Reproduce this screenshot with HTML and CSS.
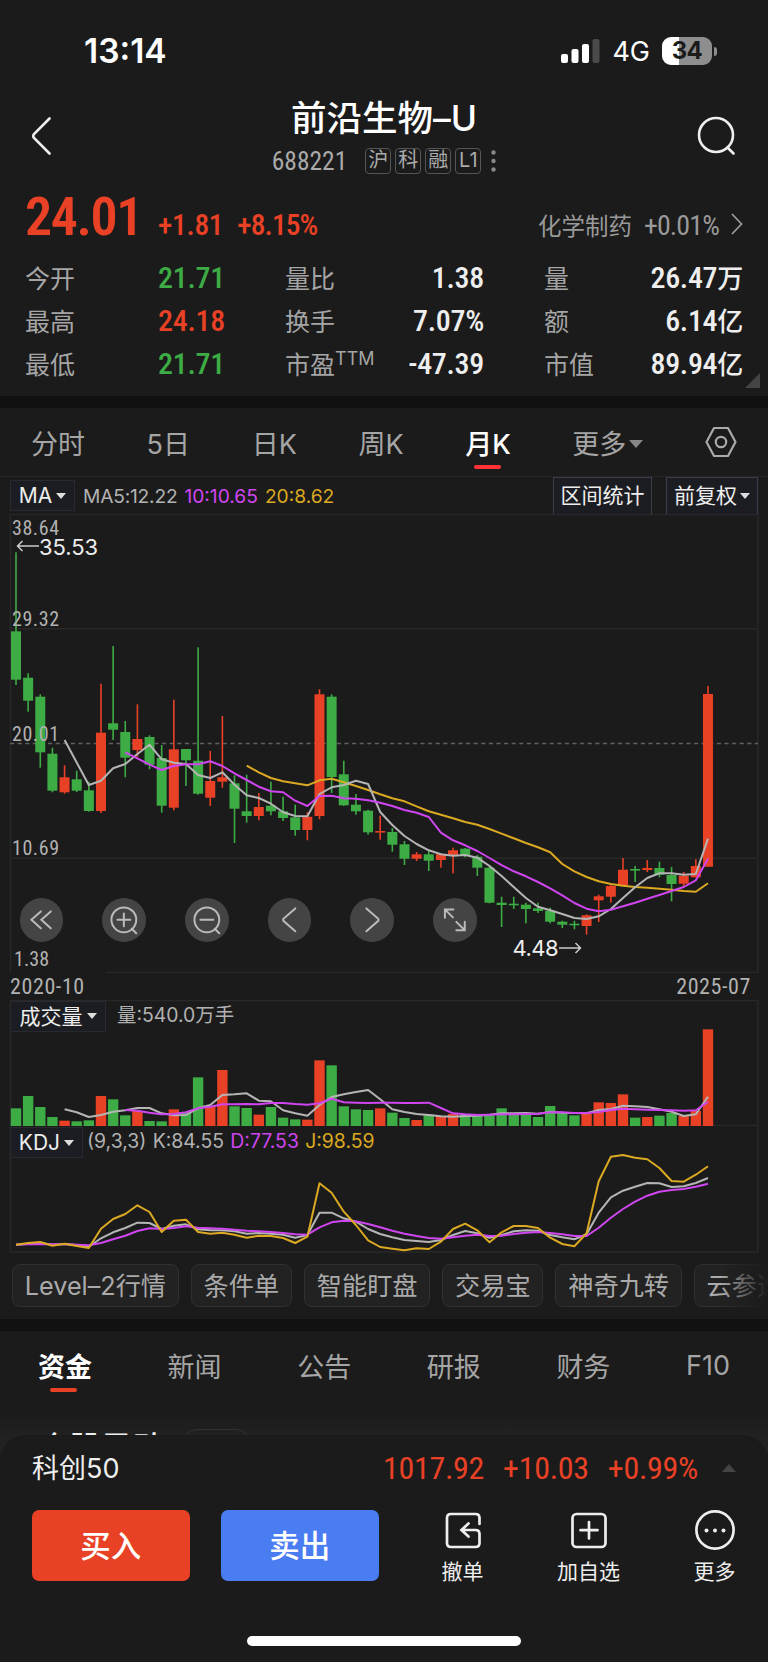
FILE: index.html
```
<!DOCTYPE html>
<html lang="zh-CN">
<head>
  <meta charset="UTF-8">
  <meta name="viewport" content="width=device-width, initial-scale=1.0">
  <title>前沿生物-U 688221</title>
  <link rel="stylesheet" href="styles.css">
</head>
<body>
  <div class="status-bar">
    <span class="time">13:14</span>
    <div class="status-right">
      <svg class="signal" width="39" height="24" viewBox="0 0 39 24">
        <rect x="0" y="15" width="7" height="9" rx="2" fill="#fff"/>
        <rect x="10.5" y="10" width="7" height="14" rx="2" fill="#fff"/>
        <rect x="21" y="5" width="7" height="19" rx="2" fill="#fff"/>
        <rect x="31.5" y="0" width="7" height="24" rx="2" fill="#4a4a4a"/>
      </svg>
      <span class="network">4G</span>
      <div class="battery"><span>34</span></div>
    </div>
  </div>

  <header class="header">
    <svg width="40" height="38" viewBox="0 0 40 38"><path d="M18.5 1.5 L3 17 Q1.5 19 3 21 L18.5 36.5" fill="none" stroke="#eee" stroke-width="2.6" stroke-linecap="round"/></svg>
    <div class="title">
      <h1>前沿生物–U</h1>
      <div class="code-row">
        <span class="code num">688221</span>
        <span class="tag">沪</span><span class="tag">科</span><span class="tag">融</span><span class="tag">L1</span>
        <svg width="5" height="22" viewBox="0 0 5 22" fill="#888"><circle cx="2.5" cy="2.5" r="2.2"/><circle cx="2.5" cy="11" r="2.2"/><circle cx="2.5" cy="19.5" r="2.2"/></svg>
      </div>
    </div>
    <svg width="40" height="40" viewBox="0 0 40 40" fill="none" stroke="#eee" stroke-width="2.6" stroke-linecap="round"><circle cx="19" cy="19" r="17"/><path d="M30.5 31.5 L36.5 37.5"/></svg>
  </header>

  <section class="quote">
    <div class="price-row">
      <span class="price num">24.01</span>
      <span class="change num">+1.81</span>
      <span class="change percent num">+8.15%</span>
      <span class="sector">化学制药</span>
      <span class="sector-change num">+0.01%</span>
      <svg width="12" height="22" viewBox="0 0 12 22"><path d="M1 1 L10.5 11 L1 21" fill="none" stroke="#999" stroke-width="1.8"/></svg>
    </div>
    <div class="stats">
      <span>今开</span><b class="num green">21.71</b><span>量比</span><b class="num">1.38</b><span>量</span><b class="num">26.47<small>万</small></b>
      <span>最高</span><b class="num red">24.18</b><span>换手</span><b class="num">7.07%</b><span>额</span><b class="num">6.14<small>亿</small></b>
      <span>最低</span><b class="num green">21.71</b><span>市盈<sup>TTM</sup></span><b class="num">-47.39</b><span>市值</span><b class="num">89.94<small>亿</small></b>
    </div>
    <i class="corner"></i>
  </section>

  <nav class="period-tabs">
    <span>分时</span>
    <span>5日</span>
    <span>日K</span>
    <span>周K</span>
    <span class="active">月K</span>
    <span>更多<i class="caret"></i></span>
    <svg width="32" height="32" viewBox="0 0 32 32" fill="none" stroke="#aaa" stroke-width="2.2" stroke-linejoin="round"><path d="M9 2 H23 L30.5 16 L23 30 H9 L1.5 16 Z"/><circle cx="16" cy="16" r="5.2"/></svg>
  </nav>

  <section class="charts">
    <div class="ma-row">
      <span class="pick ma-pick">MA<i class="caret"></i></span>
      <span class="c-white">MA5:12.22</span>
      <span class="c-purple">10:10.65</span>
      <span class="c-yellow">20:8.62</span>
      <span class="tool range">区间统计</span>
      <span class="tool adjust">前复权<i class="caret"></i></span>
    </div>

    <div class="panel">
      <svg id="kline" width="768" height="459" viewBox="0 514 768 459">
        <path class="grid" d="M10.5 973 V514.5 H758 V972.5 M10 628.8 H758 M10 858.3 H758 M106 972.5 H758"/>
        <path class="dash" d="M10 743.6 H758"/>
      </svg>
      <div class="chart-buttons">
        <button><svg viewBox="0 0 44 44"><path d="M21 13.5 L11.5 22 L21 30.5 M31 13.5 L21.5 22 L31 30.5"/></svg></button>
        <button><svg viewBox="0 0 44 44"><circle cx="22" cy="22" r="12.5"/><path d="M15.5 22 H28.5 M22 15.5 V28.5 M30 31 L34.5 35.5"/></svg></button>
        <button><svg viewBox="0 0 44 44"><circle cx="22" cy="22" r="12.5"/><path d="M15.5 22 H28.5 M30 31 L34.5 35.5"/></svg></button>
        <button><svg viewBox="0 0 44 44"><path d="M27.5 10.5 L15.5 21 Q15 22 15.5 23 L27.5 33.5"/></svg></button>
        <button><svg viewBox="0 0 44 44"><path d="M16.5 10.5 L28.5 21 Q29 22 28.5 23 L16.5 33.5"/></svg></button>
        <button><svg viewBox="0 0 44 44"><path d="M12 20 V11.5 H20.5 M12 11.5 L20 19.5 M23.5 24 L32 32.5 M32 24 V32.5 H23.5"/></svg></button>
      </div>
    </div>
    <div class="dates num"><span>2020-10</span><span>2025-07</span></div>

    <div class="panel">
      <svg id="volume" width="768" height="126" viewBox="0 1000 768 126">
        <path class="grid" d="M10.5 1126 V1000.5 H758 V1126 M10 1125.5 H758"/>
      </svg>
      <div class="panel-head">
        <span class="pick vol-pick">成交量<i class="caret"></i></span>
        <span class="c-white vol-value">量:540.0万手</span>
      </div>
    </div>
    <div class="panel">
      <svg id="kdj" width="768" height="127" viewBox="0 1126 768 127">
        <path class="grid" d="M10.5 1126 V1252 H758 V1126"/>
      </svg>
      <div class="panel-head">
        <span class="pick kdj-pick">KDJ<i class="caret"></i></span>
        <span class="c-white">(9,3,3)</span>
        <span class="c-white">K:84.55</span>
        <span class="c-purple">D:77.53</span>
        <span class="c-yellow">J:98.59</span>
      </div>
    </div>
  </section>

  <div class="chips">
    <span>Level–2行情</span><span>条件单</span><span>智能盯盘</span><span>交易宝</span><span>神奇九转</span><span>云参选</span>
  </div>

  <nav class="info-tabs">
    <span class="active">资金</span>
    <span>新闻</span>
    <span>公告</span>
    <span>研报</span>
    <span>财务</span>
    <span>F10</span>
  </nav>

  <div class="next-section">
    <h2>个股异动</h2><i class="pill"></i>
  </div>

  <footer class="sheet">
    <div class="index-row">
      <span class="index-name">科创50</span>
      <span class="num">1017.92</span>
      <span class="num">+10.03</span>
      <span class="num">+0.99%</span>
      <i class="caret-up"></i>
    </div>
    <div class="actions">
      <button class="buy">买入</button>
      <button class="sell">卖出</button>
      <div class="action">
        <svg viewBox="0 0 40 40"><path d="M36.5 14 V8 Q36.5 4 32.5 4 H8 Q4 4 4 8 V33 Q4 37 8 37 H32.5 Q36.5 37 36.5 33 V24 Q36.5 20 32.5 20 H19 M25.5 13.5 L18.5 20 L25.5 26.5"/></svg>
        撤单
      </div>
      <div class="action">
        <svg viewBox="0 0 40 40"><rect x="3.5" y="4" width="33" height="33" rx="4"/><path d="M20 12 V28.5 M11.5 20.2 H28.5"/></svg>
        加自选
      </div>
      <div class="action">
        <svg viewBox="0 0 40 40"><circle cx="20" cy="20" r="18.6"/><g fill="#eee" stroke="none"><circle cx="11.5" cy="20.5" r="2"/><circle cx="20" cy="20.5" r="2"/><circle cx="28.5" cy="20.5" r="2"/></g></svg>
        更多
      </div>
    </div>
    <div class="home-bar"></div>
  </footer>
  <script src="chart.js"></script>
</body>
</html>
```
FILE: styles.css
```
* {
  box-sizing: border-box;
}
body {
  margin: 0;
  width: 768px;
  height: 1663px;
  overflow: hidden;
  position: relative;
  background: #1b1b1b;
  color: #eee;
  font-family: Inter, "Noto Sans CJK SC", sans-serif;
}
svg {
  display: block;
}
button {
  border: 0;
  padding: 0;
  font-family: inherit;
}
.num {
  font-family: Roboto, "Noto Sans CJK SC", sans-serif;
  font-stretch: 75%;
  letter-spacing: -0.3px;
}
.red {
  color: #e84125;
}
.green {
  color: #3dac45;
}

/* status bar */
.status-bar {
  display: flex;
  justify-content: space-between;
  align-items: center;
  height: 102px;
  padding: 0 56px 0 84px;
}
.time {
  font-size: 33.5px;
  font-weight: 600;
  color: #fff;
}
.status-right {
  display: flex;
  align-items: center;
}
.network {
  margin: 1px 12px 0;
  font-size: 27px;
  color: #fff;
}
.battery {
  position: relative;
  width: 50px;
  height: 28px;
  border-radius: 9px;
  background: linear-gradient(to right, #fff 17px, #8e8e8e 17px);
  color: #1b1b1b;
  font-size: 24px;
  font-weight: 700;
  line-height: 28px;
  letter-spacing: -0.5px;
  text-align: center;
}
.battery::after {
  content: "";
  position: absolute;
  right: -5px;
  top: 10px;
  width: 3px;
  height: 9px;
  border-radius: 0 3px 3px 0;
  background: #8e8e8e;
}

/* header */
.header {
  display: flex;
  justify-content: space-between;
  align-items: center;
  height: 68px;
  padding: 0 31px;
}
.title {
  display: flex;
  flex-direction: column;
  align-items: center;
  padding-top: 3px;
}
h1 {
  margin: 0;
  font-size: 35.5px;
  font-weight: 500;
  line-height: 34px;
  color: #fff;
}
.code-row {
  display: flex;
  align-items: center;
  gap: 4px;
  margin-top: 12px;
}
.code {
  margin-right: 14px;
  font-size: 25.5px;
  line-height: 26px;
  letter-spacing: 0;
  color: #aaa;
}
.tag {
  width: 26px;
  height: 26px;
  border: 1.5px solid #555;
  border-radius: 4px;
  font-size: 20px;
  line-height: 22px;
  text-align: center;
  color: #aaa;
}
.code-row svg {
  margin-left: 6px;
}

/* quote */
.quote {
  position: relative;
  height: 238px;
  padding: 20px 25px 0;
  border-bottom: 12px solid #111;
}
.price-row {
  display: flex;
  align-items: baseline;
  height: 65px;
}
.price {
  font-size: 54px;
  font-weight: 600;
  line-height: 54px;
  letter-spacing: -1.4px;
  color: #e84125;
}
.change {
  margin-left: 16px;
  font-size: 29.5px;
  font-weight: 500;
  color: #e84125;
}
.percent {
  margin-left: 14px;
  letter-spacing: -0.9px;
}
.sector {
  margin-left: auto;
  font-size: 23.5px;
  color: #999;
}
.sector-change {
  margin: 0 12px 0 12px;
  font-size: 28px;
  letter-spacing: -0.9px;
  color: #999;
}
.stats {
  display: grid;
  grid-template-columns: 133px 127px 84px 115px 144px 1fr;
  grid-auto-rows: 43.2px;
  align-items: center;
  font-size: 25px;
  color: #a5a5a5;
}
.stats b {
  padding-top: 2px;
  font-size: 30px;
  font-weight: 500;
  line-height: 36px;
  text-align: right;
  color: #eee;
  white-space: nowrap;
}
.stats small {
  font-size: 26px;
  line-height: 0;
}
.stats b:nth-child(6n + 2) {
  text-align: left;
}
.stats span {
  white-space: nowrap;
}
.stats span:nth-child(6n + 5) {
  padding-left: 60px;
}
.stats b.red {
  color: #e84125;
}
.stats b.green {
  color: #3dac45;
}
.stats sup {
  font-size: 18px;
  line-height: 0;
}
.corner {
  position: absolute;
  right: 8px;
  bottom: 8px;
  width: 15px;
  height: 15px;
  background: #444;
  clip-path: polygon(100% 0, 100% 100%, 0 100%);
}

/* period tabs */
.period-tabs {
  display: flex;
  justify-content: space-between;
  align-items: center;
  height: 69px;
  padding: 0 31px;
  border-bottom: 1px solid #262626;
  font-size: 27px;
  color: #a5a5a5;
}
.active {
  position: relative;
  font-weight: 500;
  color: #fff;
}
.active::after {
  content: "";
  position: absolute;
  left: calc(50% - 14px);
  bottom: -7px;
  width: 27px;
  height: 4px;
  border-radius: 2px;
  background: #ff3337;
}
.caret {
  display: inline-block;
  margin-left: 4px;
  border: 5px solid transparent;
  border-top: 6px solid #ddd;
  border-bottom: 0;
  vertical-align: 4px;
}
.period-tabs .caret {
  margin-left: 3px;
  border-width: 8px 7px 0;
  border-top-color: #888;
  vertical-align: 6px;
}

/* charts */
.ma-row {
  display: flex;
  align-items: center;
  height: 37px;
  padding: 0 10px;
  font-size: 19.2px;
}
.pick {
  display: flex;
  align-items: center;
  justify-content: center;
  height: 31px;
  border: 1px solid #282a30;
  background: #1c1d22;
  font-size: 21px;
  color: #eee;
}
.ma-pick {
  width: 65px;
  margin-right: 8px;
}
.ma-row .c-white {
  letter-spacing: -0.2px;
}
.ma-row .c-white,
.ma-row .c-purple {
  margin-right: 7px;
}
.tool {
  display: flex;
  align-items: center;
  justify-content: center;
  height: 38px;
  padding-bottom: 3px;
  border: 1.5px solid #3a3d4a;
  background: #1c1d23;
  font-size: 21px;
}
.range {
  width: 99px;
  margin-left: auto;
}
.adjust {
  width: 92px;
  margin-left: 14px;
}
.adjust .caret {
  margin: 3px 0 0 3px;
}
.c-white {
  color: #b2b2b2;
}
.c-purple {
  color: #cf46f0;
}
.c-yellow {
  color: #dba922;
}
.panel {
  position: relative;
}
.grid {
  fill: none;
  stroke: #282828;
  stroke-width: 1.5;
}
.dash {
  stroke: #606060;
  stroke-width: 1.5;
  stroke-dasharray: 4.2 3.4;
}
.line {
  fill: none;
  stroke-width: 2;
  stroke-linejoin: round;
}
.up {
  fill: #e84125;
}
.down {
  fill: #3dac45;
}
.axis {
  font-family: Roboto, sans-serif;
  font-size: 20px;
  font-stretch: 85%;
  fill: #b2b2b2;
}
.mark {
  font-size: 22px;
  fill: #eee;
}
.arrow {
  fill: none;
  stroke: #ccc;
  stroke-width: 1.5;
}
.chart-buttons {
  position: absolute;
  left: 19.5px;
  top: 384px;
  display: flex;
  gap: 39px;
}
.chart-buttons button {
  width: 43.7px;
  height: 43.7px;
  border-radius: 50%;
  background: #444;
}
.chart-buttons svg {
  fill: none;
  stroke: #bbb;
  stroke-width: 2;
  stroke-linecap: round;
}
.dates {
  display: flex;
  justify-content: space-between;
  align-items: center;
  height: 27px;
  padding: 0 17px 0 10px;
  font-size: 22px;
  letter-spacing: 0.6px;
  color: #b2b2b2;
}
.panel-head {
  position: absolute;
  left: 10px;
  top: 1px;
  display: flex;
  align-items: center;
  font-size: 19.4px;
}
.vol-pick {
  width: 96px;
  margin-right: 11px;
  padding-bottom: 4px;
}
.vol-pick .caret {
  margin-top: 3px;
}
.vol-value {
  margin-top: -6px;
}
.kdj-pick {
  width: 73px;
  margin-right: 4px;
}
.kdj-pick ~ span {
  margin: -4px 6.3px 0 0;
}

/* shortcut chips */
.chips {
  position: relative;
  display: flex;
  gap: 12px;
  height: 78px;
  padding: 11px 12px 0;
  overflow: hidden;
  border-bottom: 12px solid #111;
}
.chips span {
  flex: none;
  height: 43px;
  padding: 0 11.8px;
  border: 1px solid #303030;
  border-radius: 8px;
  background: #222;
  font-size: 25.2px;
  line-height: 42px;
  color: #aaa;
}
.chips::after {
  content: "";
  position: absolute;
  top: 0;
  right: 0;
  width: 48px;
  height: 66px;
  background: linear-gradient(to right, transparent, #1b1b1b);
}

/* info tabs */
.info-tabs {
  display: flex;
  justify-content: space-between;
  align-items: center;
  height: 72px;
  padding: 0 38px 4px;
  font-size: 27px;
  color: #a5a5a5;
}
.info-tabs .active {
  font-weight: 700;
}
.info-tabs .active::after {
  bottom: -7px;
  left: 12px;
  background: #e84125;
}
.next-section {
  display: flex;
  height: 40px;
  margin-top: 10px;
  padding: 16px 32px 0 38px;
  background: linear-gradient(#1b1b1b, #222 25px);
}
h2 {
  margin: 3px 0 0;
  font-size: 31.5px;
  font-weight: 500;
  line-height: 32px;
}
.pill {
  width: 71px;
  height: 34px;
  margin-left: 17px;
  border: 1.5px solid #333;
  border-radius: 17px;
}

/* bottom sheet */
.sheet {
  position: absolute;
  left: 0;
  right: 0;
  top: 1435px;
  height: 228px;
  padding: 0 32px;
  border-radius: 26px 26px 0 0;
  border-bottom: 1px solid #fff;
  background: #1b1b1b;
}
.index-row {
  display: flex;
  align-items: center;
  height: 66px;
  color: #e84125;
}
.index-row .num {
  font-size: 32px;
  margin-right: 19px;
}
.index-name {
  margin-right: auto;
  padding-bottom: 3px;
  font-size: 27px;
  color: #eee;
}
.caret-up {
  margin-left: 5px;
  border: 7.5px solid transparent;
  border-bottom: 8px solid #444;
  border-top: 0;
}
.actions {
  display: flex;
  align-items: flex-start;
  margin-top: 9px;
}
.buy,
.sell {
  flex: none;
  width: 157.5px;
  height: 71px;
  margin-right: 31.5px;
  padding-bottom: 3px;
  border-radius: 7px;
  background: #e84125;
  font-size: 30.5px;
  font-weight: 500;
  color: #fff;
}
.sell {
  margin-right: 52px;
  background: #4a7cf2;
}
.action {
  flex: none;
  display: flex;
  flex-direction: column;
  align-items: center;
  width: 64px;
  margin-right: 62px;
  font-size: 21px;
  line-height: 44px;
  white-space: nowrap;
}
.action svg {
  width: 40px;
  height: 40px;
  fill: none;
  stroke: #eee;
  stroke-width: 2.7;
  stroke-linecap: round;
}
.home-bar {
  position: absolute;
  left: 247px;
  top: 201px;
  width: 274px;
  height: 10px;
  border-radius: 5px;
  background: #fff;
}
```
FILE: chart.js
```
const step = 12.14;
const firstX = 16;

// u = close up (red), d = close down (green); then high, body top, body bottom, low
const candles = [
  ['d',552.3,631.3,679.7,685], ['d',673.3,677.7,700.7,711.7], ['d',694.3,696.7,752.3,767.7], ['d',747.7,753.7,790.7,792.3],
  ['u',765.3,777.3,792.3,793.7], ['d',770.7,779.3,790.7,792], ['d',781.7,790.3,811,811.7], ['u',683.7,732.7,811,813],
  ['d',646,723.3,729.7,740], ['d',721,732,757.7,777.3], ['u',704.3,739,750,756.7], ['d',735.3,737,764.7,769.3],
  ['d',745,758,805.7,812.7], ['u',699.7,749.3,807.7,810.3], ['d',749,749,760.3,786], ['d',647.3,760.7,793.7,794.7],
  ['u',751,781,797.7,806], ['u',716,777.3,781.7,787.7], ['d',775.3,783.3,808.7,843], ['d',774.7,811.3,816,822.7],
  ['u',793,807,816,820.3], ['d',781.7,805.7,811.3,815.3], ['d',796.7,811.3,818,821], ['d',804.7,817.3,830,835.7],
  ['u',812.3,816.7,830,840.3], ['u',689.3,694.3,816,819.3], ['d',694.3,696.7,777,793], ['d',760.7,774.3,805.3,806],
  ['d',794,804.7,811.3,814.7], ['d',809.7,810.7,832.3,834.7], ['u',815.7,831,832.3,839.7], ['d',828,832,844.7,851.7],
  ['d',841,844.3,858.7,865], ['u',852,854.3,858.7,861], ['d',850.7,854.3,860.7,871], ['u',853.3,854.3,860,867.7],
  ['u',847.7,850.3,855.7,873.3], ['d',848,848.7,855.7,857.3], ['d',855,856.7,867.7,876], ['d',866.3,867.7,902.7,903.3],
  ['d',896.7,902.7,905,927], ['d',896.7,903.7,905.3,909], ['d',902.7,904.7,909,923.3], ['d',902.7,908.3,911,913],
  ['d',907.7,910.7,921.7,923.3], ['d',920.7,921.7,924.7,928], ['d',920.7,923.7,925.3,929.3], ['u',914.3,915.3,926,934.7],
  ['u',894.7,896.3,900.3,922], ['u',884.7,886,896.7,902.7], ['u',858,869.7,885,885.7], ['d',866,869,870,882],
  ['u',860,868,870,872], ['d',861.7,868,874.7,877.3], ['d',867,875,884,901.3], ['u',872,875.7,883.7,886],
  ['u',859.3,866,877.3,877.3], ['u',686,694,866.7,866.7]
];

const ma5 = [740,762.5,785,780.7,768.3,764,754,744.7,759.3,762.7,764,775,778,772.3,784.7,795.3,798,803.7,812.3,816,816.3,794,787.3,785,780.7,784,812,825,836,844,850.3,854.3,855.7,855,857.7,866,876,887,898,906.7,910.3,914,918,919,916.3,909,898,887.3,878,873.3,873.3,874.7,874,838.7];
const ma10 = [752.3,758.3,764.7,770,766,764.3,764.3,761.3,766,773.3,780,786.7,791.3,792.3,800.7,806,796,795.7,798.3,798.7,800.3,802.7,806,810,812.7,817,832.7,840.3,845.3,851,858,865.2,871.3,876.3,882,888.3,895.3,903,908.7,911.3,909.7,906.3,902.7,898.7,895,891,887,880.3,858.7];
const ma20 = [765.7,772.3,778,781.3,783.3,785.3,780.3,778.7,782.3,786,790,794.3,798.3,801.3,806.3,811.3,814.7,818.3,822,824.7,829,833.6,838.3,843,847.3,852.3,864,871.3,877,881.3,884,885.7,887,887.7,888.7,889.7,891,891.7,883.3];

// volume and KDJ are kept at 3x resolution
const volume = [355,318,351,381,392,394,391,318,328,376,363,393,394,358,366,262,348,240,349,354,374,351,383,388,389,211,226,349,358,360,355,368,384,390,374,378,372,375,375,376,355,371,373,381,348,370,376,371,337,339,313,383,381,377,369,378,363,118];
const vol5 = [358,367,381,375,365,361,354,354,370,376,375,355,345,315,313,310,332,334,361,370,377,345,321,313,306,300,328,358,366,372,375,379,380,378,377,374,370,370,369,371,366,368,369,370,360,357,347,349,351,358,365,378,373,320];
const vol10 = [360,362,368,373,372,367,355,350,343,343,342,343,339,339,342,344,340,326,337,338,339,338,338,339,339,338,354,370,373,375,374,373,373,372,371,367,367,369,369,366,360,356,358,359,360,361,362,361,335];
const kdjJ = [764,759,756,767,761,768,774,716,687,672,646,666,726,692,689,726,731,728,734,743,737,738,744,759,740,580,608,665,705,751,771,776,781,775,777,755,717,701,721,757,727,708,708,714,743,762,769,730,574,500,495,503,508,534,573,575,554,529];
const kdjK = [764,761,759,764,762,765,770,745,727,714,698,699,717,707,703,718,721,721,724,731,729,731,734,743,735,668,668,685,695,717,732,742,750,753,756,750,735,723,730,743,735,724,721,722,735,742,748,733,668,622,602,590,579,580,591,589,579,564];
const kdjD = [764,763,762,763,763,764,766,759,748,737,723,715,717,714,709,713,715,716,719,722,724,726,729,733,734,712,697,692,694,702,712,722,731,738,744,746,742,737,734,738,737,732,728,726,729,733,738,738,713,683,657,635,617,605,600,597,590,581];

function add(svg, tag, attrs, text) {
  const el = document.createElementNS('http://www.w3.org/2000/svg', tag);
  for (const key in attrs) el.setAttribute(key, attrs[key]);
  if (text) el.textContent = text;
  svg.appendChild(el);
}

function drawLine(svg, values, color) {
  const start = candles.length - values.length;
  const points = values.map((y, i) => `${(firstX + (start + i) * step).toFixed(1)},${y.toFixed(1)}`).join(' ');
  add(svg, 'polyline', { class: 'line', points: points, stroke: color });
}

const fromThirds = values => values.map(v => 990 + v / 3);

const kline = document.getElementById('kline');
const vol = document.getElementById('volume');
const kdj = document.getElementById('kdj');

candles.forEach(([dir, high, top, bottom, low], i) => {
  const x = firstX + i * step;
  const cls = dir === 'u' ? 'up' : 'down';
  add(kline, 'rect', { class: cls, x: x - 0.8, y: high, width: 1.6, height: low - high });
  add(kline, 'rect', { class: cls, x: x - 5, y: top, width: 10, height: Math.max(bottom - top, 1.6) });
  const volTop = 990 + volume[i] / 3;
  add(vol, 'rect', { class: cls, x: x - 5.2, y: volTop, width: 10.4, height: 1126 - volTop });
});

drawLine(kline, ma20, '#dba922');
drawLine(kline, ma5, '#b5b5b5');
drawLine(kline, ma10, '#cf46f0');
drawLine(vol, fromThirds(vol5), '#b5b5b5');
drawLine(vol, fromThirds(vol10), '#cf46f0');
drawLine(kdj, fromThirds(kdjK), '#b5b5b5');
drawLine(kdj, fromThirds(kdjD), '#cf46f0');
drawLine(kdj, fromThirds(kdjJ), '#dba922');

[['38.64', 534.5], ['29.32', 626], ['20.01', 741], ['10.69', 855], ['1.38', 965.5]].forEach(([label, y]) => {
  add(kline, 'text', { class: 'axis', x: label === '1.38' ? 14 : 12, y: y, textLength: label === '1.38' ? 35 : 47 }, label);
});
add(kline, 'text', { class: 'mark', x: 39, y: 554.5, textLength: 59 }, '35.53');
add(kline, 'path', { class: 'arrow', d: 'M39 546 H17.5 M22.5 541 L17.5 546 L22.5 551' });
add(kline, 'text', { class: 'mark', x: 512.5, y: 956, textLength: 46 }, '4.48');
add(kline, 'path', { class: 'arrow', d: 'M559 948 H580.5 M575.5 943 L580.5 948 L575.5 953' });
```
